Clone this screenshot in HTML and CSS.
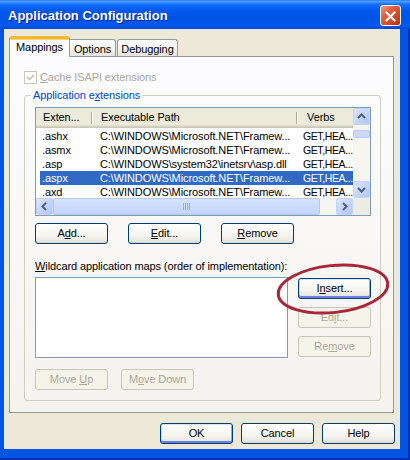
FILE: index.html
```html
<!DOCTYPE html>
<html>
<head>
<meta charset="utf-8">
<title>Application Configuration</title>
<link rel="stylesheet" href="styles.css">
</head>
<body>
<div class="window">
  <div class="titlebar">
    <span class="title">Application Configuration</span>
    <div class="close">
      <svg width="21" height="21" viewBox="0 0 21 21"><path d="M6 6 L15 15 M15 6 L6 15" stroke="#fff" stroke-width="2.4" stroke-linecap="round"/></svg>
    </div>
  </div>
  <div class="frame">
    <div class="client">
      <div class="tabs">
        <div class="tab active">Mappings</div>
        <div class="tab">Options</div>
        <div class="tab">Debugging</div>
      </div>
      <div class="panel">
        <div class="check disabled">
          <span class="cbox"><svg width="11" height="11" viewBox="0 0 11 11"><path d="M2 5 L4.5 7.5 L9 3" stroke="#CAC8BB" stroke-width="1.8" fill="none"/></svg></span>
          <span><u>C</u>ache ISAPI extensions</span>
        </div>
        <fieldset class="group">
          <legend>Application e<u>x</u>tensions</legend>
          <div class="listview">
            <div class="lv-main">
              <div class="lv-header">
                <div class="hc hc1">Exten...</div>
                <div class="hc hc2">Executable Path</div>
                <div class="hc hc3">Verbs</div>
              </div>
              <div class="lv-rows">
                <div class="lv-row"><span class="c1">.ashx</span><span class="c2">C:\WINDOWS\Microsoft.NET\Framew...</span><span class="c3">GET,HEA...</span></div>
                <div class="lv-row"><span class="c1">.asmx</span><span class="c2">C:\WINDOWS\Microsoft.NET\Framew...</span><span class="c3">GET,HEA...</span></div>
                <div class="lv-row"><span class="c1">.asp</span><span class="c2">C:\WINDOWS\system32\inetsrv\asp.dll</span><span class="c3">GET,HEA...</span></div>
                <div class="lv-row sel"><span class="c1">.aspx</span><span class="c2">C:\WINDOWS\Microsoft.NET\Framew...</span><span class="c3">GET,HEA...</span></div>
                <div class="lv-row"><span class="c1">.axd</span><span class="c2">C:\WINDOWS\Microsoft.NET\Framew...</span><span class="c3">GET,HEA...</span></div>
              </div>
            </div>
            <div class="vscroll">
              <div class="sb-btn"><svg width="15" height="15" viewBox="0 0 15 15"><path d="M4 9 L7.5 5.5 L11 9" stroke="#4D6185" stroke-width="2" fill="none"/></svg></div>
              <div class="vthumb"></div>
              <div class="sb-fill"></div>
              <div class="sb-btn"><svg width="15" height="15" viewBox="0 0 15 15"><path d="M4 6 L7.5 9.5 L11 6" stroke="#4D6185" stroke-width="2" fill="none"/></svg></div>
            </div>
            <div class="hscroll">
              <div class="sb-btn"><svg width="15" height="15" viewBox="0 0 15 15"><path d="M9 4 L5.5 7.5 L9 11" stroke="#4D6185" stroke-width="2" fill="none"/></svg></div>
              <div class="hthumb"><svg width="8" height="7" viewBox="0 0 8 7"><path d="M0.5 0 V7 M2.5 0 V7 M4.5 0 V7 M6.5 0 V7" stroke="#8CB0F8" stroke-width="1"/></svg></div>
              <div class="sb-fill"></div>
              <div class="sb-btn"><svg width="15" height="15" viewBox="0 0 15 15"><path d="M6 4 L9.5 7.5 L6 11" stroke="#4D6185" stroke-width="2" fill="none"/></svg></div>
            </div>
            <div class="corner"></div>
          </div>
          <div class="btnrow gap20">
            <button class="btn">A<u>d</u>d...</button>
            <button class="btn"><u>E</u>dit...</button>
            <button class="btn"><u>R</u>emove</button>
          </div>
          <div class="wlabel"><u>W</u>ildcard application maps (order of implementation):</div>
          <div class="wrow">
            <div class="listbox"></div>
            <div class="sidebtns">
              <button class="btn focus">I<u>n</u>sert...</button>
              <button class="btn" disabled>Ed<u>i</u>t...</button>
              <button class="btn" disabled>Re<u>m</u>ove</button>
            </div>
          </div>
          <div class="btnrow gap13 moverow">
            <button class="btn" disabled>Move <u>U</u>p</button>
            <button class="btn" disabled>M<u>o</u>ve Down</button>
          </div>
        </fieldset>
      </div>
      <div class="dlg-btns">
        <button class="btn default">OK</button>
        <button class="btn">Cancel</button>
        <button class="btn">Help</button>
      </div>
    </div>
  </div>
  <svg class="annot" width="410" height="460" viewBox="0 0 410 460">
    <ellipse cx="333" cy="289" rx="55" ry="23.5" transform="rotate(-6 333 289)" fill="none" stroke="#A8283A" stroke-width="3"/>
  </svg>
</div>
</body>
</html>
```
FILE: styles.css
```css
* { box-sizing: border-box; }
body {
  margin: 0;
  font-family: "Liberation Sans", Arial, sans-serif;
  font-size: 11px;
  letter-spacing: -0.1px;
  color: #000;
  background: #fff;
}
u { text-decoration: underline; text-underline-offset: 1px; }

.window {
  width: 410px;
  height: 460px;
  display: flex;
  flex-direction: column;
  position: relative;
  overflow: hidden;
  background: #0055E5;
}
.titlebar {
  height: 29px;
  flex: none;
  display: flex;
  align-items: center;
  justify-content: space-between;
  padding: 1px 9px 0 8px;
  background: linear-gradient(to bottom, #2A7DFF 0%, #4FA0FF 6%, #1870FF 14%, #0058EE 35%, #0054E6 65%, #0059EE 88%, #0047D6 100%);
}
.title {
  color: #fff;
  font-weight: bold;
  font-size: 13px;
  letter-spacing: 0;
  text-shadow: 1px 1px 0 #0A1E8C;
}
.close {
  width: 21px;
  height: 21px;
  border: 1px solid #fff;
  border-radius: 3px;
  background: linear-gradient(135deg, #F09A7E 0%, #E2613E 35%, #CC4420 75%, #B23512 100%);
  display: flex;
}
.frame {
  flex: 1;
  display: flex;
  padding: 0 8px 9px 4px;
  background: #0055E5;
  border-right: 2px solid #0A2FA8;
  border-bottom: 2px solid #0A2FA8;
}
.client {
  flex: 1;
  background: #ECE9D8;
  padding: 7px 6px 0 5px;
  display: flex;
  flex-direction: column;
}

/* Tabs */
.tabs {
  display: flex;
  align-items: flex-end;
  height: 21px;
  margin-bottom: -1px;
  position: relative;
  z-index: 1;
}
.tab {
  height: 17px;
  margin-bottom: 1px;
  border: 1px solid #919B9C;
  border-bottom: none;
  border-radius: 3px 3px 0 0;
  background: linear-gradient(#FFFFFF, #F3F3EF 60%, #E5E4DC);
  display: flex;
  align-items: center;
  justify-content: center;
  padding-top: 1px;
}
.tab:nth-child(2) { width: 46px; border-left: none; border-top-left-radius: 0; }
.tab:nth-child(3) { width: 61px; margin-left: 1px; }
.tab.active {
  width: 61px;
  height: 21px;
  margin-bottom: 0;
  background: #FCFCFE;
  border-top: 3px solid #F7B838;
  box-shadow: inset 0 1px 0 #FFD56A;
  padding-top: 0;
  padding-bottom: 3px;
}

.panel {
  height: 357px;
  border: 1px solid #919B9C;
  background: linear-gradient(#FCFCFE, #F4F3EE);
  display: flex;
  flex-direction: column;
  padding: 14px 12px 11px 14px;
}
.check {
  display: flex;
  align-items: center;
  gap: 3px;
  height: 13px;
  line-height: 13px;
}
.check.disabled { color: #ACA899; }
.cbox {
  width: 13px;
  height: 13px;
  border: 1px solid #CAC8BB;
  background: #fff;
  display: flex;
  align-items: center;
  justify-content: center;
}

.group {
  margin: 5px 0 0 0;
  padding: 5px 9px 10px 10px;
  border: 1px solid #D0D0BF;
  border-radius: 3px;
  min-width: 0;
  flex: 1;
}
.group legend {
  padding: 0 2px;
  margin-left: -4px;
  color: #0046D5;
  line-height: 13px;
}

/* List view */
.listview {
  height: 109px;
  border: 1px solid #7F9DB9;
  background: #fff;
  display: grid;
  grid-template-columns: 1fr 17px;
  grid-template-rows: 1fr 17px;
}
.lv-main { overflow: hidden; }
.lv-header {
  display: flex;
  height: 20px;
  background: #EBEADB;
  box-shadow: inset 0 -1px #CBC7B8, inset 0 -2px #D6D2C2, inset 0 -3px #E2DECD;
}
.hc {
  line-height: 18px;
  white-space: nowrap;
  position: relative;
}
.hc1 { width: 56px; padding-left: 7px; }
.hc2 { width: 205px; padding-left: 9px; }
.hc3 { flex: 1; padding-left: 10px; }
.hc1::after, .hc2::after {
  content: "";
  position: absolute;
  right: 0;
  top: 4px;
  height: 12px;
  width: 1px;
  background: #ACA899;
  box-shadow: 1px 0 #fff;
}
.lv-rows { margin-top: 1px; }
.lv-row {
  display: flex;
  height: 14px;
  line-height: 14px;
  margin-left: 4px;
  white-space: nowrap;
}
.lv-row.sel { background: #316AC5; color: #fff; }
.c1 { width: 52px; padding-left: 2px; }
.c2 { width: 205px; padding-left: 8px; overflow: hidden; }
.c3 { flex: 1; padding-left: 6px; font-size: 10.5px; letter-spacing: -0.4px; }

.vscroll, .hscroll {
  display: flex;
  background: #F6F5F0;
}
.vscroll { flex-direction: column; }
.sb-btn {
  width: 17px;
  height: 17px;
  flex: none;
  border: 1px solid #C3D3FD;
  border-radius: 2px;
  background: linear-gradient(135deg, #DCE6FF 0%, #C5D5FC 50%, #B2C6F7 100%);
  display: flex;
  align-items: center;
  justify-content: center;
}
.sb-fill { flex: 1; }
.vthumb {
  height: 8px;
  margin-top: 5px;
  border: 1px solid #B6C9F5;
  border-radius: 2px;
  background: #CAD9FC;
}
.hthumb {
  width: 267px;
  border: 1px solid #B6C9F5;
  border-radius: 2px;
  background: linear-gradient(#D6E2FD, #C3D4FC);
  display: flex;
  align-items: center;
  justify-content: center;
}
.corner { background: #EEEDE5; }

/* Buttons */
.btnrow { display: flex; margin-top: 7px; }
.gap20 { gap: 20px; }
.gap13 { gap: 13px; }
.moverow { margin-top: 11px; }
.btn {
  width: 73px;
  height: 21px;
  padding: 0;
  margin: 0;
  font: inherit;
  letter-spacing: inherit;
  color: #000;
  border: 1px solid #003C74;
  border-radius: 3px;
  background: linear-gradient(#FFFFFF 0%, #F4F4F0 60%, #E8E6DE 90%, #D8D2C6 100%);
  text-align: center;
  line-height: 19px;
}
.btn:disabled {
  color: #ACA899;
  border-color: #C9C7BA;
  background: #F5F4EA;
}
.btn.default, .btn.focus {
  box-shadow: inset 0 1px #CEE7FF, inset 0 -2px #6982EE, inset 1px 0 #BCD4F6, inset -1px 0 #89ADE4;
}

.wlabel { margin-top: 16px; line-height: 13px; white-space: nowrap; }
.wrow { display: flex; gap: 10px; margin-top: 4px; }
.listbox {
  width: 253px;
  height: 81px;
  border: 1px solid #7F9DB9;
  background: #fff;
}
.sidebtns {
  display: flex;
  flex-direction: column;
  gap: 8px;
  margin-top: 1px;
}

.dlg-btns {
  display: flex;
  justify-content: flex-end;
  gap: 8px;
  margin-top: 10px;
  margin-right: -1px;
}

.annot {
  position: absolute;
  left: 0;
  top: 0;
  pointer-events: none;
}
```
